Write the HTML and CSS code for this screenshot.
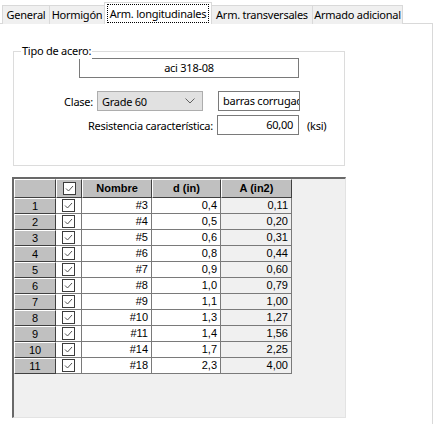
FILE: index.html
```html
<!DOCTYPE html>
<html lang="es">
<head>
<meta charset="utf-8">
<title>Arm. longitudinales</title>
<link rel="stylesheet" href="styles.css">
</head>
<body>
<div class="tabs">
  <div class="tab tab-general">General</div>
  <div class="tab tab-hormigon">Hormigón</div>
  <div class="tab tab-active"><span class="focus">Arm. longitudinales</span></div>
  <div class="tab tab-trans">Arm. transversales</div>
  <div class="tab tab-adic">Armado adicional</div>
</div>
<div class="panel">
  <div class="group">
    <span class="legend">Tipo de acero:</span>
    <div class="row row-first">
      <div class="input input-wide input-center">aci 318-08</div>
    </div>
    <div class="row row-second">
      <span class="label label-clase">Clase:</span>
      <div class="combo"><span>Grade 60</span>
        <svg class="chev" width="10" height="6" viewBox="0 0 10 6"><polyline points="0.5,0.5 5,5 9.5,0.5" fill="none" stroke="#606060" stroke-width="1"/></svg>
      </div>
      <div class="input input-short input-clip">barras corrugadas</div>
    </div>
    <div class="row row-third">
      <span class="label label-res">Resistencia característica:</span>
      <div class="input input-short input-right">60,00</div>
      <span class="unit">(ksi)</span>
    </div>
  </div>

  <div class="grid">
    <div class="c fx"></div>
    <div class="c fx ck"><svg width="13" height="13" viewBox="0 0 13 13"><rect x="0.5" y="0.5" width="12" height="12" fill="#fff" stroke="#3c3c3c"/><polyline points="3,6.5 5.5,9 10,4" fill="none" stroke="#555" stroke-width="1"/></svg></div>
    <div class="c fx hd">Nombre</div>
    <div class="c fx hd">d (in)</div>
    <div class="c fx hd">A (in2)</div>

    <div class="c fx rh">1</div><div class="c ck"><svg width="13" height="13" viewBox="0 0 13 13"><rect x="0.5" y="0.5" width="12" height="12" fill="#fff" stroke="#3c3c3c"/><polyline points="3,6.5 5.5,9 10,4" fill="none" stroke="#555"/></svg></div><div class="c">#3</div><div class="c">0,4</div><div class="c ro">0,11</div>
    <div class="c fx rh">2</div><div class="c ck"><svg width="13" height="13" viewBox="0 0 13 13"><rect x="0.5" y="0.5" width="12" height="12" fill="#fff" stroke="#3c3c3c"/><polyline points="3,6.5 5.5,9 10,4" fill="none" stroke="#555"/></svg></div><div class="c">#4</div><div class="c">0,5</div><div class="c ro">0,20</div>
    <div class="c fx rh">3</div><div class="c ck"><svg width="13" height="13" viewBox="0 0 13 13"><rect x="0.5" y="0.5" width="12" height="12" fill="#fff" stroke="#3c3c3c"/><polyline points="3,6.5 5.5,9 10,4" fill="none" stroke="#555"/></svg></div><div class="c">#5</div><div class="c">0,6</div><div class="c ro">0,31</div>
    <div class="c fx rh">4</div><div class="c ck"><svg width="13" height="13" viewBox="0 0 13 13"><rect x="0.5" y="0.5" width="12" height="12" fill="#fff" stroke="#3c3c3c"/><polyline points="3,6.5 5.5,9 10,4" fill="none" stroke="#555"/></svg></div><div class="c">#6</div><div class="c">0,8</div><div class="c ro">0,44</div>
    <div class="c fx rh">5</div><div class="c ck"><svg width="13" height="13" viewBox="0 0 13 13"><rect x="0.5" y="0.5" width="12" height="12" fill="#fff" stroke="#3c3c3c"/><polyline points="3,6.5 5.5,9 10,4" fill="none" stroke="#555"/></svg></div><div class="c">#7</div><div class="c">0,9</div><div class="c ro">0,60</div>
    <div class="c fx rh">6</div><div class="c ck"><svg width="13" height="13" viewBox="0 0 13 13"><rect x="0.5" y="0.5" width="12" height="12" fill="#fff" stroke="#3c3c3c"/><polyline points="3,6.5 5.5,9 10,4" fill="none" stroke="#555"/></svg></div><div class="c">#8</div><div class="c">1,0</div><div class="c ro">0,79</div>
    <div class="c fx rh">7</div><div class="c ck"><svg width="13" height="13" viewBox="0 0 13 13"><rect x="0.5" y="0.5" width="12" height="12" fill="#fff" stroke="#3c3c3c"/><polyline points="3,6.5 5.5,9 10,4" fill="none" stroke="#555"/></svg></div><div class="c">#9</div><div class="c">1,1</div><div class="c ro">1,00</div>
    <div class="c fx rh">8</div><div class="c ck"><svg width="13" height="13" viewBox="0 0 13 13"><rect x="0.5" y="0.5" width="12" height="12" fill="#fff" stroke="#3c3c3c"/><polyline points="3,6.5 5.5,9 10,4" fill="none" stroke="#555"/></svg></div><div class="c">#10</div><div class="c">1,3</div><div class="c ro">1,27</div>
    <div class="c fx rh">9</div><div class="c ck"><svg width="13" height="13" viewBox="0 0 13 13"><rect x="0.5" y="0.5" width="12" height="12" fill="#fff" stroke="#3c3c3c"/><polyline points="3,6.5 5.5,9 10,4" fill="none" stroke="#555"/></svg></div><div class="c">#11</div><div class="c">1,4</div><div class="c ro">1,56</div>
    <div class="c fx rh">10</div><div class="c ck"><svg width="13" height="13" viewBox="0 0 13 13"><rect x="0.5" y="0.5" width="12" height="12" fill="#fff" stroke="#3c3c3c"/><polyline points="3,6.5 5.5,9 10,4" fill="none" stroke="#555"/></svg></div><div class="c">#14</div><div class="c">1,7</div><div class="c ro">2,25</div>
    <div class="c fx rh">11</div><div class="c ck"><svg width="13" height="13" viewBox="0 0 13 13"><rect x="0.5" y="0.5" width="12" height="12" fill="#fff" stroke="#3c3c3c"/><polyline points="3,6.5 5.5,9 10,4" fill="none" stroke="#555"/></svg></div><div class="c">#18</div><div class="c">2,3</div><div class="c ro">4,00</div>
  </div>
</div>
</body>
</html>
```
FILE: styles.css
```css
* { box-sizing: border-box; }
html, body { margin: 0; padding: 0; background: #fff; }
body {
  width: 433px;
  height: 424px;
  overflow: hidden;
  font-family: "Noto Sans", "Liberation Sans", sans-serif;
  font-size: 11px;
  letter-spacing: -0.25px;
  color: #000;
}
.tabs {
  display: flex;
  align-items: flex-end;
  height: 24px;
  padding-left: 2px;
  position: relative;
  z-index: 1;
}
.tab {
  height: 19px;
  line-height: 17px;
  text-align: center;
  background: #f0f0f0;
  border: 1px solid #d9d9d9;
  border-bottom: 0;
  margin-right: -1px;
  white-space: nowrap;
  overflow: hidden;
}
.tab-general { width: 48px; }
.tab-hormigon { width: 56px; }
.tab-trans { width: 102px; }
.tab-adic { width: 91px; }
.tab-active {
  width: 108px;
  height: 22px;
  background: #fff;
  padding: 1px 2px 0 2px;
}
.focus {
  display: block;
  border: 1px dotted #000;
  height: 19px;
}
.panel {
  border-top: 1px solid #d9d9d9;
  border-right: 1px solid #d9d9d9;
  margin-top: -1px;
  height: 401px;
  padding: 27px 0 0 13px;
}
.group {
  position: relative;
  width: 332px;
  height: 115px;
  border: 1px solid #dcdcdc;
  padding-top: 6px;
}
.legend {
  position: absolute;
  left: 7px;
  top: -9px;
  padding: 0 1px;
  background: #fff;
  line-height: 16px;
}
.row { display: flex; align-items: center; }
.row-first { padding-left: 65px; }
.row-second { margin-top: 13px; }
.row-third { margin-top: 4px; }
.input {
  height: 20px;
  border: 1px solid #7a7a7a;
  background: #fff;
  line-height: 18px;
  padding: 0 5px;
  white-space: nowrap;
  overflow: hidden;
}
.input-wide { width: 220px; }
.input-short { width: 82px; }
.input-center { text-align: center; }
.input-right { text-align: right; }
.input-clip { padding: 0 0 0 4px; margin-left: 15px; }
.label { text-align: right; padding-right: 4px; white-space: nowrap; }
.label-clase { width: 83px; }
.label-res { width: 203px; }
.combo {
  display: flex;
  align-items: center;
  justify-content: space-between;
  width: 106px;
  height: 20px;
  background: #e1e1e1;
  border: 1px solid #adadad;
  padding: 0 7px 0 4px;
}
.chev { display: block; }
.unit { margin-left: 8px; }

.grid {
  margin: 11px 0 0 -1px;
  width: 334px;
  height: 241px;
  background: #f0f0f0;
  border-top: 2px solid #696969;
  border-left: 2px solid #696969;
  border-right: 1px solid #e3e3e3;
  border-bottom: 1px solid #e3e3e3;
  display: grid;
  grid-template-columns: 42px 26px 70px 69px 71px;
  grid-template-rows: 19px;
  grid-auto-rows: 16px;
  align-content: start;
  justify-content: start;
  font-family: "Liberation Sans", Arial, sans-serif;
  font-size: 11px;
  letter-spacing: 0;
}
.c {
  background: #fff;
  border-right: 1px solid #7a7a7a;
  border-bottom: 1px solid #7a7a7a;
  text-align: right;
  padding-right: 3px;
  line-height: 15px;
  white-space: nowrap;
}
.c.ro { background: #f0f0f0; }
.fx {
  background: #c0c0c0;
  border-top: 1px solid #fff;
  border-left: 1px solid #fff;
  border-right: 1px solid #404040;
  border-bottom: 1px solid #404040;
  text-align: center;
  padding-right: 0;
  line-height: 16px;
}
.fx.hd { font-weight: bold; }
.fx.rh { line-height: 14px; }
.ck { display: flex; align-items: center; justify-content: center; padding: 0; }
.ck svg { display: block; }
```
